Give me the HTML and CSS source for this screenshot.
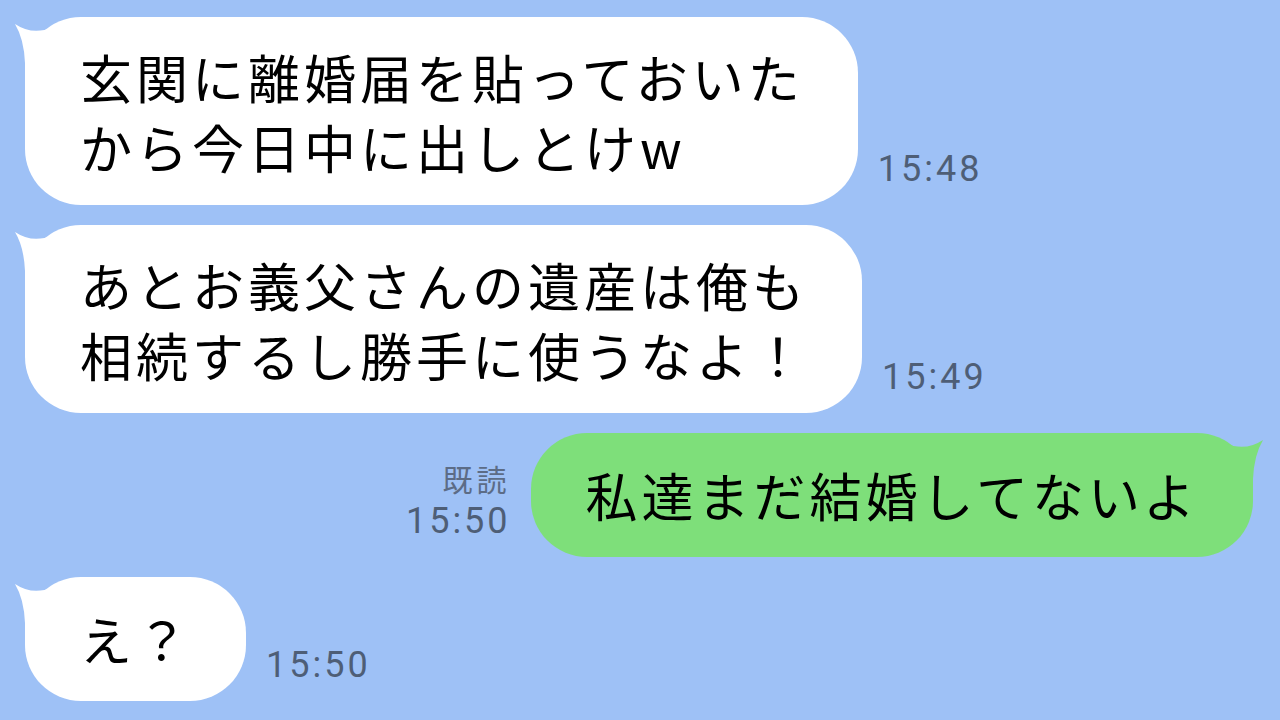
FILE: index.html
```
<!DOCTYPE html>
<html>
  <head>
    <meta charset="UTF-8">
    <title>トーク</title>
    <link rel="stylesheet" href="styles.css">
  </head>
  <body>
    <div class="chat">
      <div class="row incoming">
        <div class="bubble">
          <svg class="tail" width="50" height="60" viewBox="0 0 50 60"><path d="M2 5 Q20 17 40 8 L40 56 L12 56 L12 44 Q11 20 2 5 Z"/></svg>
          玄関に離婚届を貼っておいた<br>から今日中に出しとけw
        </div>
        <div class="meta"><span class="time">15:48</span></div>
      </div>
      <div class="row incoming">
        <div class="bubble">
          <svg class="tail" width="50" height="60" viewBox="0 0 50 60"><path d="M2 5 Q20 17 40 8 L40 56 L12 56 L12 44 Q11 20 2 5 Z"/></svg>
          あとお義父さんの遺産は俺も<br>相続するし勝手に使うなよ！
        </div>
        <div class="meta"><span class="time">15:49</span></div>
      </div>
      <div class="row outgoing">
        <div class="meta"><span class="read">既読</span><span class="time">15:50</span></div>
        <div class="bubble single">
          <svg class="tail" width="50" height="60" viewBox="0 0 50 60"><path d="M2 5 Q20 17 40 8 L40 56 L12 56 L12 44 Q11 20 2 5 Z"/></svg>
          私達まだ結婚してないよ
        </div>
      </div>
      <div class="row incoming">
        <div class="bubble single">
          <svg class="tail" width="50" height="60" viewBox="0 0 50 60"><path d="M2 5 Q20 17 40 8 L40 56 L12 56 L12 44 Q11 20 2 5 Z"/></svg>
          え？
        </div>
        <div class="meta"><span class="time">15:50</span></div>
      </div>
    </div>
  </body>
</html>
```
FILE: styles.css
```
* {
  box-sizing: border-box;
}
html, body {
  margin: 0;
  height: 100%;
}
body {
  background-color: rgb(158, 193, 246);
  font-family: "Noto Sans CJK JP", sans-serif;
  overflow: hidden;
}
.chat {
  display: flex;
  flex-direction: column;
  gap: 20px;
  padding: 17px 27px 0 25px;
}
.row {
  display: flex;
  align-items: flex-end;
  gap: 20px;
}
.row.outgoing {
  justify-content: flex-end;
}
.bubble {
  position: relative;
  background-color: white;
  color: black;
  font-size: 52px;
  letter-spacing: 4px;
  line-height: 70px;
  padding: 25px 54px 23px 55px;
  border-radius: 56px;
  white-space: nowrap;
}
.bubble.single {
  padding-top: 27px;
  padding-bottom: 27px;
}
.tail {
  position: absolute;
  left: -12px;
  top: 2px;
  fill: white;
}
.outgoing .bubble {
  background-color: rgb(126, 223, 122);
}
.outgoing .tail {
  left: auto;
  right: -12px;
  fill: rgb(126, 223, 122);
  transform: scaleX(-1);
}
.meta {
  display: flex;
  flex-direction: column;
  align-items: flex-end;
  color: rgb(78, 94, 118);
  margin-bottom: 16px;
}
.time {
  font-family: Roboto, sans-serif;
  font-size: 36px;
  letter-spacing: 3px;
  line-height: 40px;
}
.read {
  font-size: 30px;
  letter-spacing: 4px;
  line-height: 34px;
  margin-bottom: 6px;
  color: rgb(92, 108, 134);
}
```
